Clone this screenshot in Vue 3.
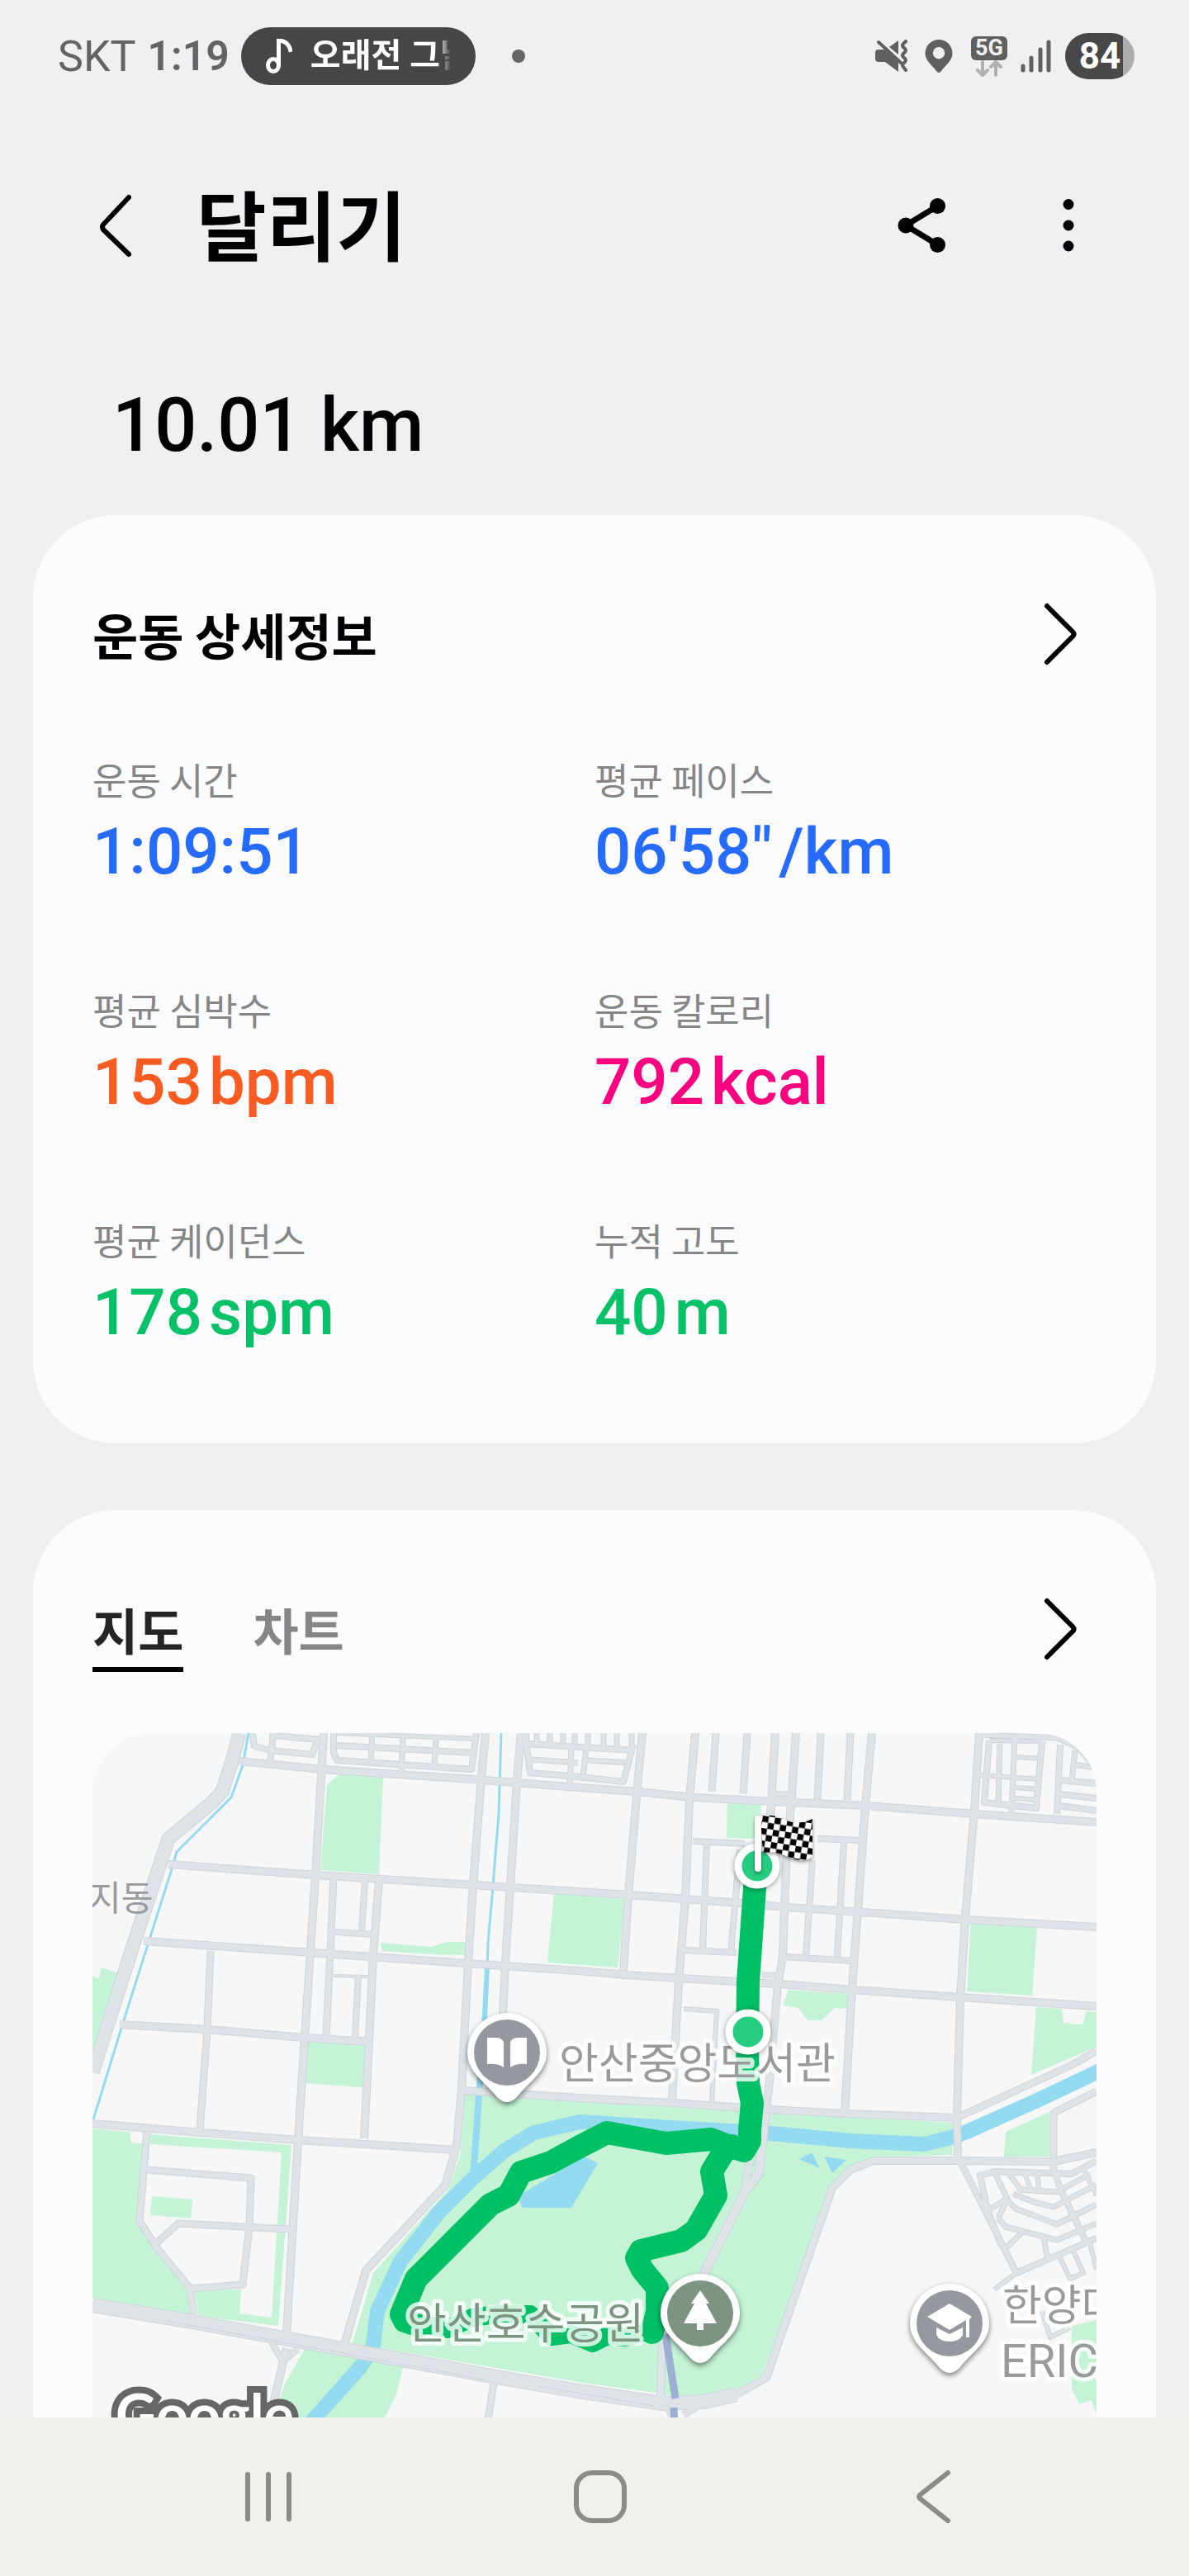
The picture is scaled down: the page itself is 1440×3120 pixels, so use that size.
<template>
  <div class="screen">
    <header class="statusbar">
      <span class="carrier">SKT</span>
      <span class="clock">1:19</span>
      <div class="nowplaying">
        <svg class="note" viewBox="0 0 32 42" aria-hidden="true">
          <ellipse cx="9" cy="32" rx="6.5" ry="7.5" />
          <path d="M15.500 32V2C22 2 29 6 30 16" />
        </svg>
        <span class="songtitle">오래전 그날</span>
      </div>
      <span class="dot"></span>
      <div class="statusicons">
        <svg class="icon-mute" viewBox="0 0 40 40" aria-hidden="true">
          <path
            class="fill"
            d="M28 1v17L17 9zM4 12h7l17 15v12L12 27H4q-4 0-4-4v-7q0-4 4-4z"
          />
          <path class="line" d="M4 3l27 25" />
          <path
            class="line"
            d="M37 2l-3 3q-2 2 0 4l2 2q2 2 0 4l-2 2q-2 2 0 4l2 2q2 2 0 4l-2 2q-2 2 0 4l3 4"
          />
        </svg>
        <svg class="icon-pin" viewBox="0 0 34 40" aria-hidden="true">
          <path
            class="fill"
            fill-rule="evenodd"
            d="M17 0a16.500 16.500 0 0 1 16.500 16.500c0 9-8 14-13.500 21.500q-3 4-6 0C8.500 30.500.500 25.500.500 16.500A16.500 16.500 0 0 1 17 0zm0 9a7.200 7.200 0 1 0 0 14.400A7.200 7.200 0 1 0 17 9z"
          />
        </svg>
        <div class="network">
          <span class="badge5g">5G</span>
          <svg class="icon-arrows" viewBox="0 0 44 20" aria-hidden="true">
            <path d="M14 2v15M8 12l6 6 6-6M30 18V3M24 8l6-6 6 6" />
          </svg>
        </div>
        <svg class="icon-signal" viewBox="0 0 38 40" aria-hidden="true">
          <path d="M3 32v5M13 22v15M24 12v25M34 3v34" />
        </svg>
        <div class="battery">84</div>
      </div>
    </header>

    <main class="content">
      <div class="appbar">
        <button class="iconbutton" aria-label="뒤로">
          <svg class="chevron" viewBox="0 0 88 88">
            <path d="M62 10L31 43q-2 3 0 6L62 79" />
          </svg>
        </button>
        <h1 class="title">달리기</h1>
        <button class="iconbutton" aria-label="공유">
          <svg viewBox="0 0 88 88">
            <path class="shareline" d="M63.500 20.500L25 44l38.500 23.500" />
            <circle cx="63.500" cy="20.500" r="9.500" />
            <circle cx="25" cy="44" r="9.500" />
            <circle cx="63.500" cy="67.500" r="9.500" />
          </svg>
        </button>
        <button class="iconbutton" aria-label="더보기">
          <svg viewBox="0 0 88 88">
            <circle cx="44" cy="18.500" r="6.500" />
            <circle cx="44" cy="44" r="6.500" />
            <circle cx="44" cy="69" r="6.500" />
          </svg>
        </button>
      </div>

      <p class="distance">10.01 km</p>

      <section class="card details">
        <div class="cardheader">
          <h2 class="heading">운동 상세정보</h2>
          <button class="iconbutton" aria-label="운동 상세정보 열기">
            <svg class="chevron" viewBox="0 0 88 88">
              <path d="M28 10l31 31q3 3 0 6L28 78" />
            </svg>
          </button>
        </div>
        <dl class="metrics">
          <div v-for="metric in metrics" :key="metric.label">
            <dt class="label">{{ metric.label }}</dt>
            <dd class="value" :class="metric.color">
              <span>{{ metric.value }}</span>
              <span v-if="metric.unit">{{ metric.unit }}</span>
            </dd>
          </div>
        </dl>
      </section>

      <section class="card route">
        <div class="cardheader tabsheader">
          <div class="tabs" role="tablist">
            <button
              v-for="tab in tabs"
              :key="tab"
              class="tab"
              :class="{ active: tab === activeTab }"
              role="tab"
              :aria-selected="tab === activeTab"
              @click="activeTab = tab"
            >
              {{ tab }}
            </button>
          </div>
          <button class="iconbutton" aria-label="지도 열기">
            <svg class="chevron" viewBox="0 0 88 88">
              <path d="M28 10l31 31q3 3 0 6L28 78" />
            </svg>
          </button>
        </div>

        <svg class="map" viewBox="0 0 1216 920" role="img" aria-label="지도">
          <defs>
            <pattern
              id="checks"
              width="15"
              height="15"
              patternUnits="userSpaceOnUse"
              patternTransform="translate(812 100) rotate(9)"
            >
              <rect width="15" height="15" fill="#fff" />
              <rect width="7.500" height="7.500" />
              <rect x="7.500" y="7.500" width="7.500" height="7.500" />
            </pattern>
          </defs>

          <path v-for="d in parks" :key="d" class="park" :d="d" />

          <!-- river, canals and ponds -->
          <path
            class="river"
            d="M262 838L326 766 340 742 345 700 373 640 420 580 460 540 500 505 535 484 590 471 700 478 811 484 918 494 1008 498 1043 489 1061 482 1142 446 1216 411 1240 398"
          />
          <path class="water" d="M475 284L481 284 478 345 472 440 466 526 484 524 452 560 458 525 464 440 472 340z" />
          <path class="water" d="M596 513L612 521 580 575 521 575 515 561 560 534z" />
          <path class="water" d="M856 516l15-8 10 19zM886 513l27 4-17 16z" />
          <path class="canal" d="M189 0L182 39 168 78 102 144 95 168 37 351 1 468" />
          <path class="canal" d="M495 0L492 98 484 198 479 254 478 290" />

          <path
            v-for="road in roads"
            :key="road.d"
            class="roadedge"
            :d="road.d"
            :stroke-width="road.w + 1"
          />
          <path
            v-for="road in roads"
            :key="road.d"
            class="road"
            :d="road.d"
            :stroke-width="road.w - 1"
          />
          <path class="roadmark" d="M88 712L330 756 478 784M540 791L680 815" />
          <path class="rail" d="M694 728L706 806M704 817L705 840" />

          <path
            class="track"
            d="M805 161L802 188 794 301 793 381 794 424 799 448 796 481 796 494 789 506 770 500 749 492 695 497 623 484 592 500 555 520 519 532 504 560 482 571 392 661 374 704 378 712 396 718"
          />
          <path
            class="track"
            d="M774 500L764 508 750 531 755 560 731 602 713 615 664 627 659 636 666 650 684 672 684 700 678 726"
          />
          <path
            class="track thin"
            d="M390 714L430 722 460 708 490 704 530 704 556 731 580 728 606 739 624 730 646 732 674 724"
          />

          <g class="place">
            <text class="small" x="-4" y="215">지동</text>
            <text x="565" y="419">안산중앙도서관</text>
            <text class="parkname" x="381" y="734">안산호수공원</text>
            <text x="1102" y="712">한양대</text>
            <text class="latin" x="1100" y="780">ERICA</text>
          </g>

          <g class="stop">
            <circle cx="805" cy="161" r="23" />
            <circle cx="794" cy="362" r="23" />
          </g>
          <g class="flag">
            <path class="cloth" d="M809 100Q826 98 840 106 856 112 872 104V150Q862 158 842 150 828 142 812 145z" />
            <path class="pole" d="M806 104V164" />
          </g>

          <g v-for="pin in pins" :key="pin.kind" :transform="`translate(${pin.x} ${pin.y})`">
            <path
              class="pinbody"
              d="M0-48A48 48 0 0 1 48 0C48 24 26 36 12 54Q0 66-12 54C-26 36-48 24-48 0A48 48 0 0 1 0-48z"
            />
            <circle r="40" :class="['pinface', pin.kind]" />
            <path class="pinicon" :d="pin.icon" />
          </g>

          <text class="google" x="28" y="850">Google</text>
        </svg>
      </section>
    </main>

    <nav class="navbar">
      <button class="navbutton" aria-label="최근 앱">
        <svg viewBox="0 0 64 64">
          <path d="M7 5v54M32 5v54M57 5v54" />
        </svg>
      </button>
      <button class="navbutton" aria-label="홈">
        <svg viewBox="0 0 64 64">
          <rect x="3" y="3" width="58" height="58" rx="19" />
        </svg>
      </button>
      <button class="navbutton" aria-label="이전">
        <svg viewBox="0 0 64 64">
          <path d="M51 3L17 30q-2 2 0 4L51 61" />
        </svg>
      </button>
    </nav>
  </div>
</template>

<script setup>
import { ref } from 'vue'

const metrics = [
  { label: '운동 시간', value: '1:09:51', unit: '', color: 'blue' },
  { label: '평균 페이스', value: '06\'58"', unit: '/km', color: 'blue' },
  { label: '평균 심박수', value: '153', unit: 'bpm', color: 'orange' },
  { label: '운동 칼로리', value: '792', unit: 'kcal', color: 'pink' },
  { label: '평균 케이던스', value: '178', unit: 'spm', color: 'green' },
  { label: '누적 고도', value: '40', unit: 'm', color: 'green' },
]

const tabs = ['지도', '차트']
const activeTab = ref('지도')

const parks = [
  'M300 49L352 54 347 171 276 166 284 63z',
  'M349 254L410 259 429 253 453 253 453 269 410 268 351 264z',
  'M559 194L645 201 636 284 551 278z',
  'M261 374L333 378 327 429 257 424z',
  'M0 294L8 298 10 284 33 291 0 394z',
  'M769 80L810 86 807 128 768 127z',
  'M1064 228L1144 236 1138 318 1059 313z',
  'M843 311L915 316 914 334 899 333 883 348 866 348 855 333 836 330z',
  'M1143 332L1174 334 1176 351 1200 353 1203 337 1216 338 1216 380 1137 414z',
  'M1159 459L1159 513 1104 513 1106 483z',
  'M1186 718L1216 711 1216 824 1209 808 1195 813 1186 794z',
  'M0 479L45 483 47 496 64 498 55 591 117 671 121 706 0 684z',
  'M70 486L241 499 225 718 129 706 123 676 180 674 178 703 217 708 229 508 70 498z',
  'M72 561L121 565 119 588 70 584z',
  'M451 437L588 446 702 453 810 459 1043 472 1041 511 945 514 916 528 893 551 811 778 780 798 713 804 688 800 588 786 315 739 340 654 431 553 446 508z',
  'M257 746L376 768 368 801 349 840 215 840 233 788z',
]

const roads = [
  // highways
  { d: 'M178 0L170 31 157 71 145 84 92 128 82 158 49 258 0 411', w: 16 },
  { d: 'M0 693L110 711 315 748 478 778 588 797 691 812 740 810 780 801', w: 17 },
  // east-west streets
  { d: 'M178 34L278 44 474 57 588 66 660 71 727 78 824 83 937 88 1068 98 1216 108', w: 9 },
  { d: 'M92 159L270 172 461 184 506 187 588 192 649 196 718 201 786 206 840 211 933 217 1057 226 1216 235', w: 9 },
  { d: 'M62 252L266 266 453 279 588 288 647 293 712 297 832 304 920 311 1051 320 1216 331', w: 9 },
  { d: 'M33 353L139 359 257 369 335 374', w: 9 },
  { d: 'M0 473L131 484 249 493 441 505', w: 9 },
  { d: 'M449 433L588 442 702 448 819 456 912 461 1047 466', w: 9 },
  // north-south streets
  { d: 'M280 0L270 172 257 369 249 493 235 728', w: 9 },
  { d: 'M143 264L139 359 130 481', w: 8 },
  { d: 'M292 174L288 266 283 368', w: 8 },
  { d: 'M330 178L326 239', w: 7 },
  { d: 'M347 179L340 268 335 373 329 491', w: 9 },
  { d: 'M294 241L340 244', w: 7 },
  { d: 'M292 294L335 295', w: 3 },
  { d: 'M322 293L318 369', w: 7 },
  { d: 'M476 0L471 54 461 184 455 278 447 431 441 501 427 548 331 651 306 738', w: 9 },
  { d: 'M519 0L514 59 506 186 500 278 497 341', w: 9 },
  { d: 'M666 0L660 64 649 196 643 288', w: 9 },
  { d: 'M730 0L723 81 718 201 710 301 702 444', w: 9 },
  { d: 'M755 0L750 71', w: 8 },
  { d: 'M793 0L788 74', w: 8 },
  { d: 'M827 0L821 101 818 140', w: 9 },
  { d: 'M852 0L847 74 840 161 836 271 830 304 819 431 815 461', w: 9 },
  { d: 'M882 0L878 81', w: 8 },
  { d: 'M918 0L914 81', w: 8 },
  { d: 'M944 0L936 88 927 214 920 308 911 461', w: 9 },
  { d: 'M1074 0L1068 94 1057 224 1051 321 1047 464 1048 514', w: 9 },
  // blocks around the finish
  { d: 'M727 131L790 134', w: 7 },
  { d: 'M878 128L931 130', w: 7 },
  { d: 'M744 134L739 261', w: 7 },
  { d: 'M784 141L773 266', w: 7 },
  { d: 'M872 154L864 271', w: 7 },
  { d: 'M910 131L902 271', w: 7 },
  { d: 'M716 263L780 266', w: 7 },
  { d: 'M836 271L923 276', w: 7 },
  { d: 'M811 293L830 293', w: 6 },
  { d: 'M716 334L756 337 750 448', w: 5 },
  { d: 'M824 74L847 74', w: 6 },
  // northern housing blocks
  { d: 'M194 0L196 16 215 21 266 26 273 8 220 3', w: 7 },
  { d: 'M219 0L215 36', w: 7 },
  { d: 'M292 0L292 24 296 33 459 44 465 0', w: 7 },
  { d: 'M294 15L462 24', w: 7 },
  { d: 'M294 0L463 7', w: 5 },
  { d: 'M339 0L337 36M416 4L414 43M376 4L374 50', w: 6 },
  { d: 'M525 0L525 11 530 48 588 53 643 59 655 14', w: 7 },
  { d: 'M525 13L588 17 657 21', w: 7 },
  { d: 'M532 32L588 36', w: 6 },
  { d: 'M598 33L649 36', w: 6 },
  { d: 'M538 0V14M554 0V15M570 0V16M584 0V16M600 0V17M619 0V18M635 0V19M653 0V20', w: 6 },
  { d: 'M580 18L578 62M598 18L594 53', w: 6 },
  { d: 'M1086 9L1080 84 1143 91 1150 10', w: 7 },
  { d: 'M1086 9L1150 10', w: 5 },
  { d: 'M1099 13L1097 86M1117 3L1113 98', w: 6 },
  { d: 'M1074 51L1148 56', w: 5 },
  { d: 'M1116 29L1150 31M1116 66L1147 68M1116 79L1145 81', w: 5 },
  { d: 'M1074 2L1169 6 1194 18 1216 44', w: 6 },
  { d: 'M1172 14L1168 98', w: 7 },
  { d: 'M1171 57L1216 61M1171 74L1216 79M1170 88L1216 94', w: 7 },
  { d: 'M1190 21L1186 58M1186 38L1216 42', w: 6 },
  // west side
  { d: 'M66 483L57 591 76 621 117 671 123 704', w: 8 },
  { d: 'M66 529L192 539 190 598 182 668 119 673', w: 8 },
  { d: 'M76 619L104 594 239 601', w: 8 },
  { d: 'M235 745L219 812 214 840', w: 9 },
  { d: 'M217 738L230 761 249 746', w: 7 },
  { d: 'M486 788L476 850', w: 8 },
  // around the park
  { d: 'M815 461L807 534 791 554 738 660', w: 11 },
  { d: 'M797 515L789 554', w: 8 },
  { d: 'M780 801L816 781 896 551 918 529 945 518 1048 518 1164 519 1216 508', w: 9 },
  { d: 'M690 724L688 801 704 829 708 850', w: 9 },
  { d: 'M740 810L716 826', w: 8 },
  // east side
  { d: 'M1047 466L1186 402 1216 385', w: 8 },
  { d: 'M1164 529L1164 460 1216 434', w: 8 },
  { d: 'M1052 521L1119 654 1216 612', w: 7 },
  { d: 'M1216 518L1186 534 1092 531 1075 536 1084 578 1101 621', w: 7 },
  { d: 'M1092 531L1108 564 1084 578M1108 564L1097 588', w: 6 },
  { d: 'M1108 531L1124 553 1168 556 1208 534', w: 6 },
  { d: 'M1115 558L1140 568 1164 574 1216 547', w: 6 },
  { d: 'M1108 566L1118 576 1168 595 1216 571', w: 6 },
  { d: 'M1097 588L1106 598 1168 614 1216 594', w: 6 },
  { d: 'M1164 529L1173 554 1204 618', w: 7 },
  { d: 'M1128 531L1136 552M1144 532L1146 552M1200 528L1216 560', w: 5 },
  { d: 'M1152 611L1157 638M1128 603L1104 626', w: 6 },
  { d: 'M1171 634L1184 661 1200 654 1188 628M1208 618L1216 650', w: 5 },
  { d: 'M1119 654L1092 674', w: 5 },
  { d: 'M1150 700L1160 732 1184 720', w: 5 },
]

const pins = [
  {
    kind: 'library',
    x: 502,
    y: 387,
    icon: 'M-24-18H-12Q-5-17-4-12V18Q-11 13-24 14zM24-18H12Q5-17 4-12V18Q11 13 24 14z',
  },
  {
    kind: 'forest',
    x: 736,
    y: 703,
    icon: 'M0-28L11-12H7L20 12H4V20H-4V12H-20L-7-12H-11z',
  },
  {
    kind: 'university',
    x: 1038,
    y: 715,
    icon: 'M0-24L27-8 24-5V17H20V-4L0 8-27-8zM-16 5L0 13 16 5V14Q12 22 0 22T-16 14z',
  },
]
</script>

<style>
body {
  background-color: #f0f0f2;
}
</style>

<style scoped>
.screen {
  display: flex;
  flex-direction: column;
  height: 100vh;
  color: #000;
  background-color: #f0f0f2;
  font-family: 'Noto Sans CJK KR', Roboto, sans-serif;
}
button {
  margin: 0;
  padding: 0;
  border: 0;
  background: none;
  font-family: inherit;
}
h1,
h2,
p,
dl,
dd {
  margin: 0;
}

/* status bar */
.statusbar {
  display: flex;
  flex: none;
  align-items: center;
  gap: 14px;
  height: 136px;
  padding: 0 66px 0 70px;
  color: #646464;
  font-family: Roboto, 'Noto Sans CJK KR', sans-serif;
  font-size: 52px;
}
.clock {
  font-size: 50px;
  font-weight: 600;
}
.nowplaying {
  display: flex;
  align-items: center;
  box-sizing: border-box;
  gap: 22px;
  width: 284px;
  height: 70px;
  padding: 0 30px;
  border-radius: 35px;
  background-color: #454746;
}
.note {
  flex: none;
  width: 32px;
  fill: none;
  stroke: #fff;
  stroke-width: 5;
}
.songtitle {
  overflow: hidden;
  color: #fff;
  font-size: 40px;
  font-weight: 700;
  line-height: 60px;
  white-space: nowrap;
  mask-image: linear-gradient(to right, #000 90%, transparent);
}
.dot {
  width: 16px;
  height: 16px;
  margin-left: 30px;
  border-radius: 50%;
  background-color: #646464;
}
.statusicons {
  display: flex;
  align-items: center;
  gap: 16px;
  margin-left: auto;
}
.statusicons svg {
  display: block;
  fill: none;
  stroke-linecap: round;
  stroke-linejoin: round;
}
.statusicons .fill {
  fill: #606060;
}
.icon-mute {
  width: 40px;
}
.icon-mute .line {
  stroke: #606060;
  stroke-width: 4;
}
.icon-pin {
  width: 34px;
  margin: 0 6px 0 4px;
}
.network {
  width: 44px;
}
.badge5g {
  display: block;
  height: 29px;
  border-radius: 6px;
  color: #f0f0f2;
  background-color: #606060;
  font-size: 27px;
  font-weight: 700;
  line-height: 29px;
  text-align: center;
}
.icon-arrows {
  width: 44px;
  stroke: #b0b0b0;
  stroke-width: 4;
}
.icon-signal {
  width: 38px;
  stroke: #606060;
  stroke-width: 5;
}
.battery {
  width: 84px;
  height: 56px;
  border-radius: 28px;
  color: #fff;
  background: linear-gradient(to right, #484848 70px, #adadad 70px);
  font-size: 44px;
  font-weight: 700;
  line-height: 56px;
  text-align: center;
}

/* page */
.content {
  flex: 1;
  min-height: 0;
  overflow: hidden;
}
.appbar {
  display: flex;
  align-items: center;
  height: 274px;
  padding: 0 102px 0 94px;
}
.title {
  flex: 1;
  margin-left: 56px;
  padding-bottom: 8px;
  font-size: 92px;
  font-weight: 700;
  line-height: 112px;
}
.iconbutton {
  flex: none;
  width: 88px;
  height: 88px;
}
.iconbutton svg {
  display: block;
}
.iconbutton + .iconbutton {
  margin-left: 90px;
}
.chevron {
  fill: none;
  stroke: #000;
  stroke-width: 6;
  stroke-linecap: round;
}
.shareline {
  fill: none;
  stroke: #000;
  stroke-width: 7;
}
.distance {
  padding: 52px 136px 54px;
  font-family: Roboto, sans-serif;
  font-size: 90px;
  font-weight: 500;
  line-height: 108px;
}
.card {
  margin: 0 40px 81px;
  padding: 100px 72px 113px;
  border-radius: 100px;
  background-color: #fcfcff;
}
.cardheader {
  display: flex;
  align-items: center;
  justify-content: space-between;
}
.heading {
  font-size: 60px;
  font-weight: 700;
  line-height: 88px;
}
.metrics {
  display: grid;
  grid-template-columns: 1fr 1fr;
  row-gap: 116px;
  margin-top: 102px;
}
.label {
  color: #868687;
  font-size: 45px;
  line-height: 60px;
}
.value {
  display: flex;
  gap: 8px;
  margin-top: 13px;
  font-family: Roboto, sans-serif;
  font-size: 78px;
  font-weight: 500;
  line-height: 90px;
}
.blue {
  color: #256bff;
}
.orange {
  color: #f95b21;
}
.pink {
  color: #fb007f;
}
.green {
  color: #06c167;
}
.tabsheader {
  align-items: flex-start;
}
.tabs {
  display: flex;
  gap: 84px;
}
.tab {
  padding-bottom: 2px;
  border-bottom: 6px solid transparent;
  color: #868687;
  font-size: 60px;
  font-weight: 700;
  line-height: 88px;
}
.tab.active {
  border-color: #000;
  color: #252527;
}

/* map */
.map {
  display: block;
  width: 100%;
  margin-top: 74px;
  border-radius: 72px;
  background-color: #f7f7f7;
}
.park {
  fill: #c4f3d5;
}
.water {
  fill: #94daf0;
}
.river,
.canal,
.road,
.roadedge,
.roadmark,
.rail,
.track {
  fill: none;
  stroke-linejoin: round;
}
.river {
  stroke: #94daf0;
  stroke-width: 18;
}
.canal {
  stroke: #94daf0;
  stroke-width: 3;
}
.roadedge {
  stroke: #cdd4da;
}
.road {
  stroke: #dde3e7;
}
.roadmark {
  stroke: #cdd4da;
  stroke-width: 1;
}
.rail {
  stroke: #9dafd3;
  stroke-width: 9;
}
.track {
  stroke: #00c066;
  stroke-width: 28;
  stroke-linecap: round;
}
.track.thin {
  stroke-width: 22;
}
.place {
  fill: #9a9a9c;
  stroke: rgba(255, 255, 255, 0.8);
  stroke-width: 10;
  stroke-linejoin: round;
  font-size: 52px;
  paint-order: stroke;
}
.place .small {
  stroke: none;
  font-size: 42px;
}
.place .latin {
  font-family: Roboto, sans-serif;
  font-size: 56px;
}
.place .parkname {
  fill: #7c9380;
}
.stop {
  fill: #26cc80;
  stroke: #fff;
  stroke-width: 9;
  filter: drop-shadow(0 1px 3px rgba(0, 0, 0, 0.4));
}
.flag {
  filter: drop-shadow(0 2px 2px rgba(0, 0, 0, 0.4));
}
.cloth {
  fill: url(#checks);
}
.pole {
  stroke: #fff;
  stroke-width: 8;
  stroke-linecap: round;
}
.pinbody {
  fill: #fff;
  filter: drop-shadow(0 3px 3px rgba(0, 0, 0, 0.5));
}
.pinface {
  fill: #95999f;
}
.pinface.forest {
  fill: #7e9482;
}
.pinicon {
  fill: #fff;
}
.google {
  fill: #fff;
  stroke: #666;
  stroke-width: 16;
  font-family: Lato, sans-serif;
  font-size: 68px;
  font-weight: 700;
  paint-order: stroke;
}

/* system navigation */
.navbar {
  display: grid;
  flex: none;
  grid-template-columns: repeat(3, 1fr);
  height: 192px;
  padding: 0 110px 0 124px;
  background-color: #eff1ec;
}
.navbutton {
  display: flex;
  align-items: center;
  justify-content: center;
}
.navbutton svg {
  width: 64px;
  fill: none;
  stroke: #8a8d87;
  stroke-width: 6;
  stroke-linecap: round;
}
</style>
